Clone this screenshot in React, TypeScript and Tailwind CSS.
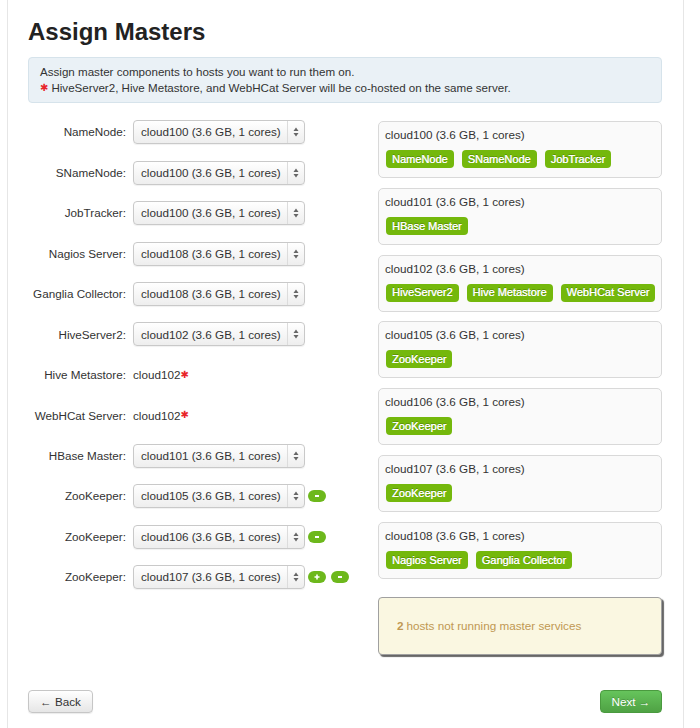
import React from "react";

type Row =
  | { label: string; host: string; kind: "select"; controls?: ("plus" | "minus")[] }
  | { label: string; host: string; kind: "text" };

const rows: Row[] = [
  { label: "NameNode:", host: "cloud100", kind: "select" },
  { label: "SNameNode:", host: "cloud100", kind: "select" },
  { label: "JobTracker:", host: "cloud100", kind: "select" },
  { label: "Nagios Server:", host: "cloud108", kind: "select" },
  { label: "Ganglia Collector:", host: "cloud108", kind: "select" },
  { label: "HiveServer2:", host: "cloud102", kind: "select" },
  { label: "Hive Metastore:", host: "cloud102", kind: "text" },
  { label: "WebHCat Server:", host: "cloud102", kind: "text" },
  { label: "HBase Master:", host: "cloud101", kind: "select" },
  { label: "ZooKeeper:", host: "cloud105", kind: "select", controls: ["minus"] },
  { label: "ZooKeeper:", host: "cloud106", kind: "select", controls: ["minus"] },
  { label: "ZooKeeper:", host: "cloud107", kind: "select", controls: ["plus", "minus"] },
];

const hosts = [
  { name: "cloud100", services: ["NameNode", "SNameNode", "JobTracker"] },
  { name: "cloud101", services: ["HBase Master"] },
  { name: "cloud102", services: ["HiveServer2", "Hive Metastore", "WebHCat Server"] },
  { name: "cloud105", services: ["ZooKeeper"] },
  { name: "cloud106", services: ["ZooKeeper"] },
  { name: "cloud107", services: ["ZooKeeper"] },
  { name: "cloud108", services: ["Nagios Server", "Ganglia Collector"] },
];

function Star() {
  return <span className="text-[#e8262b] text-[10px] leading-none" style={{ fontFamily: "'DejaVu Sans', sans-serif" }}>✱</span>;
}

function SelectBox({ host }: { host: string }) {
  return (
    <div className="flex items-center w-[172px] h-[24px] rounded-[4px] border border-[#c9c9c9] bg-gradient-to-b from-white to-[#eeeeee] shadow-[0_1px_1px_rgba(0,0,0,0.06)]">
      <span className="flex-1 pl-[7px] text-[11.7px] text-[#333] whitespace-nowrap">{host} (3.6 GB, 1 cores)</span>
      <span className="flex items-center justify-center w-[17px] h-full border-l border-[#dcdcdc]">
        <svg width="6" height="10" viewBox="0 0 6 10">
          <path d="M3 0.5 L5.5 4 L0.5 4 Z" fill="#666" />
          <path d="M3 9.5 L5.5 6 L0.5 6 Z" fill="#666" />
        </svg>
      </span>
    </div>
  );
}

function Pill({ type }: { type: "plus" | "minus" }) {
  return (
    <span className="flex items-center justify-center w-[18px] h-[12px] rounded-full bg-[#6db81c]">
      {type === "minus" ? (
        <span className="w-[4px] h-[2px] bg-white" />
      ) : (
        <svg width="6" height="6" viewBox="0 0 6 6">
          <path d="M3 0.5 V5.5 M0.5 3 H5.5" stroke="white" strokeWidth="1.6" />
        </svg>
      )}
    </span>
  );
}

export default function App() {
  return (
    <div className="min-h-[728px] bg-white" style={{ fontFamily: "'Liberation Sans', Arial, sans-serif" }}>
      <div className="ml-[7px] w-[677px] min-h-[728px] border-x border-[#e6e6e6] pl-[20px] pr-[21px] pt-[18px]">
        <h1 className="text-[24px] leading-[28px] font-bold text-[#222]">Assign Masters</h1>

        {/* Info alert */}
        <div className="mt-[11px] rounded-[4px] border border-[#d6e3eb] bg-[#eaf1f6] px-[11px] py-[6px] text-[11.6px] leading-[16px] text-[#333]">
          <p>Assign master components to hosts you want to run them on.</p>
          <p className="flex items-center gap-[3px]">
            <Star />
            <span>HiveServer2, Hive Metastore, and WebHCat Server will be co-hosted on the same server.</span>
          </p>
        </div>

        <div className="flex mt-[9px]">
          {/* Left: assignments */}
          <div className="w-[350px] shrink-0">
            {rows.map((row, i) => (
              <div key={i} className="flex items-center h-[40.45px]">
                <label className="w-[98px] text-right text-[11.7px] text-[#333] whitespace-nowrap">{row.label}</label>
                <div className="ml-[7px] flex items-center">
                  {row.kind === "select" ? (
                    <>
                      <SelectBox host={row.host} />
                      {row.controls && (
                        <div className="flex items-center gap-[5px] ml-[3px]">
                          {row.controls.map((c) => (
                            <Pill key={c} type={c} />
                          ))}
                        </div>
                      )}
                    </>
                  ) : (
                    <span className="flex items-center text-[11.7px] text-[#333]">
                      {row.host}
                      <Star />
                    </span>
                  )}
                </div>
              </div>
            ))}
          </div>

          {/* Right: hosts */}
          <div className="w-[284px] shrink-0 pt-[9px]">
            <div className="flex flex-col gap-[9.8px]">
              {hosts.map((h) => (
                <div key={h.name} className="rounded-[5px] border border-[#d9d9d9] bg-[#fafafa] pl-[6px] pt-[6px] pb-[9px]">
                  <div className="text-[11.7px] leading-[14px] text-[#333]">{h.name} (3.6 GB, 1 cores)</div>
                  <div className="mt-[8px] flex gap-[8px] pl-[1px]">
                    {h.services.map((s) => (
                      <span
                        key={s}
                        className="h-[18px] flex items-center px-[6px] rounded-[4px] bg-[#74b80c] text-white text-[11px] whitespace-nowrap [text-shadow:0_-1px_0_rgba(0,0,0,0.25),0.3px_0_0_#fff]"
                      >
                        {s}
                      </span>
                    ))}
                  </div>
                </div>
              ))}
            </div>

            <div className="mt-[18px] h-[58px] flex items-center rounded-[4px] border border-[#a0a0a0] bg-[#faf7e1] pl-[18px] shadow-[2px_2px_1px_#666] text-[11.7px] text-[#c09853]">
              <span className="font-bold mr-[3px]">2</span> hosts not running master services
            </div>
          </div>
        </div>

        {/* Footer */}
        <div className="mt-[35px] flex justify-between">
          <button className="h-[23px] w-[65px] rounded-[4px] border border-[#c6c6c6] bg-gradient-to-b from-white to-[#e6e6e6] text-[11.7px] text-[#333] shadow-[0_1px_1px_rgba(0,0,0,0.08)]">
            ← Back
          </button>
          <button className="h-[23px] w-[62px] rounded-[4px] border border-[#4a9a3f] bg-gradient-to-b from-[#66c45c] to-[#4fa244] text-[11.7px] text-white [text-shadow:0_-1px_0_rgba(0,0,0,0.2)]">
            Next →
          </button>
        </div>
      </div>
    </div>
  );
}
